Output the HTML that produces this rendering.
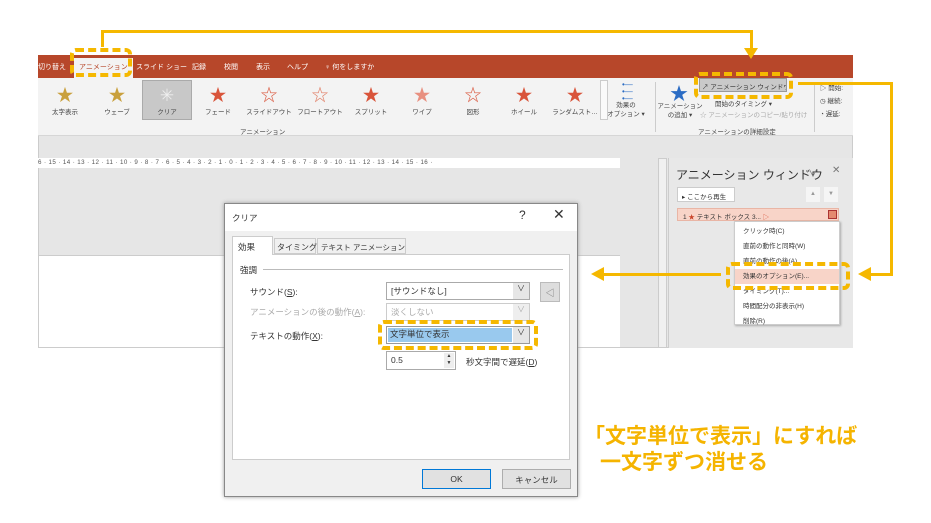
<!DOCTYPE html>
<html><head><meta charset="utf-8"><style>
*{margin:0;padding:0;box-sizing:border-box}
body{width:931px;height:523px;background:#fff;position:relative;overflow:hidden;font-family:"Liberation Sans","Noto Sans CJK JP",sans-serif;font-size:8px;color:#333}
.a{position:absolute}
.y{background:#f5b800}
.dash{position:absolute;border:4px dashed #f5b800;border-radius:6px}
.st{position:absolute;font-size:17px;color:#d9543a;line-height:18px;text-align:center;width:30px}
.lb{position:absolute;font-size:6.5px;color:#444;text-align:center;width:60px;white-space:nowrap}
.tb{position:absolute;top:62px;font-size:7px;color:#fff;white-space:nowrap}
</style></head><body>
<div class="a" style="left:38px;top:55px;width:815px;height:293px;background:#e6e6e6;border:1px solid #ccc"></div>
<div class="a" style="left:38px;top:55px;width:815px;height:23px;background:#b7472a"></div>
<span class="tb" style="left:38px">切り替え</span>
<span class="a" style="left:74px;top:58px;background:#f3f3f3;color:#b7472a;padding:4px 5px;height:20px;font-size:7px;white-space:nowrap">アニメーション</span>
<span class="tb" style="left:136px">スライド ショー</span>
<span class="tb" style="left:192px">記録</span>
<span class="tb" style="left:224px">校閲</span>
<span class="tb" style="left:256px">表示</span>
<span class="tb" style="left:287px">ヘルプ</span>
<span class="tb" style="left:325px">♀ 何をしますか</span>
<div class="a" style="left:38px;top:78px;width:815px;height:58px;background:#f3f3f3;border-bottom:1px solid #d6d6d6"></div>
<div class="a" style="left:142px;top:80px;width:50px;height:40px;background:#c8c8c8;border:1px solid #aaa"></div>
<div class="st" style="left:50px;top:87px;color:#c9a03c">★</div><div class="lb" style="left:35px;top:106px">太字表示</div>
<div class="st" style="left:102px;top:87px;color:#c9a03c">★</div><div class="lb" style="left:87px;top:106px">ウェーブ</div>
<div class="st" style="left:152px;top:87px;color:#eee">✳</div><div class="lb" style="left:137px;top:106px">クリア</div>
<div class="st" style="left:203px;top:87px">★</div><div class="lb" style="left:188px;top:106px">フェード</div>
<div class="st" style="left:254px;top:87px">☆</div><div class="lb" style="left:239px;top:106px">スライドアウト</div>
<div class="st" style="left:305px;top:87px;color:#e07a60">☆</div><div class="lb" style="left:290px;top:106px">フロートアウト</div>
<div class="st" style="left:356px;top:87px">★</div><div class="lb" style="left:341px;top:106px">スプリット</div>
<div class="st" style="left:407px;top:87px;color:#e89080">★</div><div class="lb" style="left:392px;top:106px">ワイプ</div>
<div class="st" style="left:458px;top:87px">☆</div><div class="lb" style="left:443px;top:106px">図形</div>
<div class="st" style="left:509px;top:87px">★</div><div class="lb" style="left:494px;top:106px">ホイール</div>
<div class="st" style="left:560px;top:87px">★</div><div class="lb" style="left:545px;top:106px">ランダムスト…</div>
<div class="a" style="left:600px;top:80px;width:8px;height:40px;border:1px solid #ccc;background:#fafafa"></div>
<div class="lb" style="left:601px;top:101px;width:50px;line-height:9px">効果の<br>オプション ▾</div>
<div class="a" style="left:622px;top:81px;color:#2b6cc4;font-size:8px;line-height:7px">•—<br>•—<br>•—</div>
<div class="a" style="left:655px;top:82px;width:1px;height:50px;background:#ccc"></div>
<div class="a" style="left:670px;top:80px;font-size:18px;color:#2b6cc4">★</div>
<div class="lb" style="left:650px;top:102px;line-height:9px;width:60px">アニメーション<br>の追加 ▾</div>
<div class="a" style="left:699px;top:78px;width:88px;height:14px;background:#c9c9c9;border:1px solid #999;font-size:6.5px;padding:2px 2px;white-space:nowrap;overflow:hidden">↗ アニメーション ウィンドウ</div>
<div class="a" style="left:715px;top:98px;font-size:6.5px;color:#444;white-space:nowrap">開始のタイミング ▾</div>
<div class="a" style="left:700px;top:109px;font-size:6.5px;color:#aaa;white-space:nowrap;width:112px;overflow:hidden">☆ アニメーションのコピー/貼り付け</div>
<div class="a" style="left:698px;top:126px;font-size:6.5px;color:#444;white-space:nowrap">アニメーションの詳細設定</div>
<div class="a" style="left:240px;top:126px;font-size:6.5px;color:#444">アニメーション</div>
<div class="a" style="left:814px;top:82px;width:1px;height:50px;background:#ccc"></div>
<div class="a" style="left:820px;top:82px;font-size:6.5px;line-height:13px;color:#444;white-space:nowrap">▷ 開始:<br>◷ 継続:<br>◔ 遅延:</div>
<div class="a" style="left:38px;top:158px;width:582px;height:10px;background:#fff;font-size:6.2px;color:#555;white-space:nowrap;overflow:hidden;letter-spacing:0.4px;padding-top:1px">6 · 15 · 14 · 13 · 12 · 11 · 10 · 9 · 8 · 7 · 6 · 5 · 4 · 3 · 2 · 1 · 0 · 1 · 2 · 3 · 4 · 5 · 6 · 7 · 8 · 9 · 10 · 11 · 12 · 13 · 14 · 15 · 16 ·</div>
<div class="a" style="left:39px;top:255px;width:581px;height:92px;background:#fff;border-top:1px solid #ccc"></div>
<div class="a" style="left:658px;top:158px;width:9px;height:190px;background:#f0f0f0;border:1px solid #ccc"></div>
<div class="a" style="left:668px;top:158px;width:185px;height:190px;background:#e8e8e8;border-left:1px solid #ccc"></div>
<div class="a" style="left:676px;top:166px;font-size:12px;color:#333;white-space:nowrap">アニメーション ウィンドウ</div>
<div class="a" style="left:808px;top:165px;font-size:10px;color:#777">∨</div>
<div class="a" style="left:832px;top:165px;font-size:10px;color:#777">✕</div>
<div class="a" style="left:677px;top:187px;width:58px;height:15px;background:#fff;border:1px solid #ccc;font-size:6.5px;padding:3px 4px;white-space:nowrap">▸ ここから再生</div>
<div class="a" style="left:806px;top:187px;width:14px;height:15px;background:#f5f5f5;font-size:6px;color:#999;text-align:center;padding-top:4px">▲</div>
<div class="a" style="left:824px;top:187px;width:14px;height:15px;background:#f5f5f5;font-size:6px;color:#999;text-align:center;padding-top:4px">▼</div>
<div class="a" style="left:677px;top:208px;width:162px;height:13px;background:#f8d4c8;border:1px solid #e9b5a5;font-size:6.5px;padding:2px 5px;white-space:nowrap">1 <span style="color:#c9442a">★</span> テキスト ボックス 3... <span style="color:#d9543a">▷</span></div>
<div class="a" style="left:828px;top:210px;width:9px;height:9px;background:#e48a70;border:1px solid #a33"></div>
<div class="a" style="left:734px;top:221px;width:106px;height:104px;background:#fff;border:1px solid #ccc;box-shadow:1px 1px 2px #aaa;font-size:6.5px;line-height:15px;color:#333;padding-left:8px;padding-top:2px;white-space:nowrap">
クリック時(C)<br>直前の動作と同時(W)<br>直前の動作の後(A)<br><span style="display:block;background:#f8d4c8;margin-left:-8px;padding-left:8px">効果のオプション(E)...</span>タイミング(T)...<br>時間配分の非表示(H)<br>削除(R)</div>
<div class="a" style="left:224px;top:203px;width:354px;height:294px;background:#f0f0f0;border:1px solid #888;box-shadow:0 0 4px #999"></div>
<div class="a" style="left:225px;top:204px;width:352px;height:27px;background:#fff"></div>
<div class="a" style="left:232px;top:212px;font-size:8.5px">クリア</div>
<div class="a" style="left:519px;top:208px;font-size:12px">?</div>
<div class="a" style="left:553px;top:206px;font-size:14px">✕</div>
<div class="a" style="left:232px;top:254px;width:338px;height:206px;background:#fff;border:1px solid #ccc"></div>
<div class="a" style="left:232px;top:236px;width:41px;height:19px;background:#fff;border:1px solid #ccc;border-bottom:none;font-size:8.5px;padding:4px 5px">効果</div>
<div class="a" style="left:274px;top:238px;width:42px;height:16px;border:1px solid #ccc;font-size:8px;padding:3px 2px;white-space:nowrap">タイミング</div>
<div class="a" style="left:317px;top:238px;width:89px;height:16px;border:1px solid #ccc;font-size:7.5px;padding:3px 3px;white-space:nowrap;overflow:hidden">テキスト アニメーション</div>
<div class="a" style="left:240px;top:264px;font-size:8.5px">強調</div>
<div class="a" style="left:263px;top:269px;width:300px;height:1px;background:#bbb"></div>
<div class="a" style="left:250px;top:286px;font-size:8.5px">サウンド(<u>S</u>):</div>
<div class="a" style="left:250px;top:306px;font-size:8.5px;color:#aaa">アニメーションの後の動作(<u>A</u>):</div>
<div class="a" style="left:250px;top:330px;font-size:8.5px">テキストの動作(<u>X</u>):</div>
<div class="a" style="left:386px;top:282px;width:144px;height:18px;border:1px solid #aaa;background:#fff;font-size:8.5px;padding:2px 4px">[サウンドなし]</div>
<div class="a" style="left:513px;top:283px;width:16px;height:16px;background:#e6e6e6;font-size:8px;text-align:center">∨</div>
<div class="a" style="left:540px;top:282px;width:20px;height:20px;border:1px solid #bbb;background:#ddd;font-size:9px;text-align:center;padding-top:3px;color:#777">◁</div>
<div class="a" style="left:386px;top:303px;width:144px;height:18px;border:1px solid #ccc;background:#fff;font-size:8.5px;padding:2px 4px;color:#aaa">淡くしない</div>
<div class="a" style="left:513px;top:304px;width:16px;height:16px;background:#eee;font-size:8px;text-align:center;color:#aaa">∨</div>
<div class="a" style="left:386px;top:326px;width:144px;height:18px;border:1px solid #999;background:#fff"></div>
<div class="a" style="left:388px;top:328px;width:124px;height:14px;background:#99c9ee;font-size:8.5px;padding:0 2px">文字単位で表示</div>
<div class="a" style="left:513px;top:327px;width:16px;height:16px;background:#e6e6e6;font-size:8px;text-align:center">∨</div>
<div class="a" style="left:386px;top:351px;width:70px;height:19px;border:1px solid #aaa;background:#fff;font-size:8.5px;padding:3px 4px">0.5</div>
<div class="a" style="left:444px;top:353px;width:10px;height:15px;background:#eee;font-size:5px;text-align:center;line-height:7px">▲<br>▼</div>
<div class="a" style="left:466px;top:356px;font-size:8.5px">秒文字間で遅延(<u>D</u>)</div>
<div class="a" style="left:422px;top:469px;width:69px;height:20px;border:1px solid #0078d7;background:#e1e1e1;font-size:8.5px;text-align:center;padding-top:4px">OK</div>
<div class="a" style="left:502px;top:469px;width:69px;height:20px;border:1px solid #adadad;background:#e1e1e1;font-size:8.5px;text-align:center;padding-top:4px">キャンセル</div>
<div class="dash" style="left:70px;top:48px;width:62px;height:29px"></div>
<div class="dash" style="left:694px;top:72px;width:99px;height:27px"></div>
<div class="dash" style="left:726px;top:262px;width:124px;height:28px"></div>
<div class="dash" style="left:378px;top:320px;width:160px;height:30px"></div>
<div class="a y" style="left:101px;top:30px;width:3px;height:17px"></div>
<div class="a y" style="left:101px;top:30px;width:652px;height:3px"></div>
<div class="a y" style="left:750px;top:30px;width:3px;height:20px"></div>
<div class="a" style="left:744px;top:48px;width:0;height:0;border-left:7px solid transparent;border-right:7px solid transparent;border-top:11px solid #f5b800"></div>
<div class="a y" style="left:798px;top:82px;width:95px;height:3px"></div>
<div class="a y" style="left:890px;top:82px;width:3px;height:194px"></div>
<div class="a y" style="left:870px;top:273px;width:23px;height:3px"></div>
<div class="a" style="left:858px;top:267px;width:0;height:0;border-top:7px solid transparent;border-bottom:7px solid transparent;border-right:13px solid #f5b800"></div>
<div class="a y" style="left:603px;top:273px;width:118px;height:3px"></div>
<div class="a" style="left:591px;top:267px;width:0;height:0;border-top:7px solid transparent;border-bottom:7px solid transparent;border-right:13px solid #f5b800"></div>
<div class="a" style="left:584px;top:424px;font-size:21px;font-weight:bold;color:#f5b400;white-space:nowrap;line-height:26px">「文字単位で表示」にすれば</div>
<div class="a" style="left:600px;top:450px;font-size:21px;font-weight:bold;color:#f5b400;white-space:nowrap;line-height:26px">一文字ずつ消せる</div>
</body></html>
